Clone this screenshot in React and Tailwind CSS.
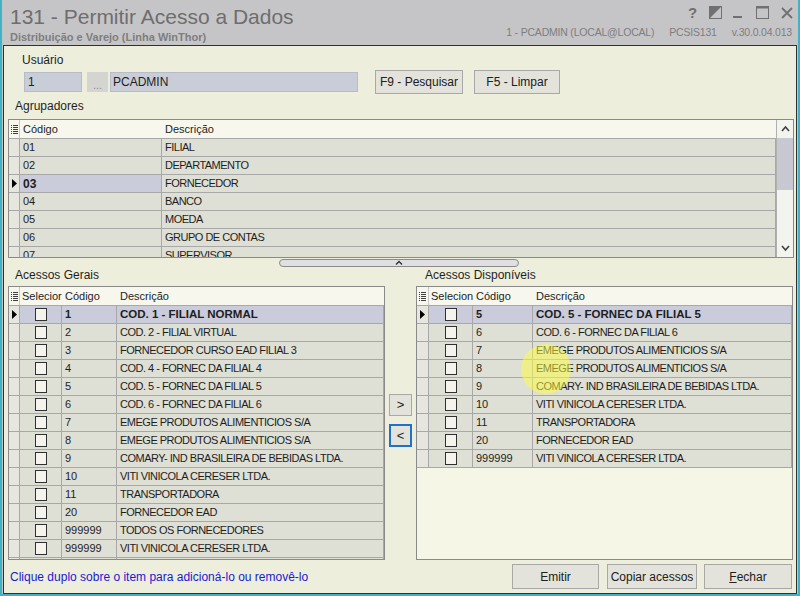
import React from 'react'

const font = "font-['Liberation_Sans',Arial,sans-serif]"

const agrupadores = [
  ['01', 'FILIAL'],
  ['02', 'DEPARTAMENTO'],
  ['03', 'FORNECEDOR'],
  ['04', 'BANCO'],
  ['05', 'MOEDA'],
  ['06', 'GRUPO DE CONTAS'],
  ['07', 'SUPERVISOR'],
]

const gerais = [
  ['1', 'COD. 1 - FILIAL NORMAL'],
  ['2', 'COD. 2 - FILIAL VIRTUAL'],
  ['3', 'FORNECEDOR CURSO EAD FILIAL 3'],
  ['4', 'COD. 4 - FORNEC DA FILIAL 4'],
  ['5', 'COD. 5 - FORNEC DA FILIAL 5'],
  ['6', 'COD. 6 - FORNEC DA FILIAL 6'],
  ['7', 'EMEGE PRODUTOS ALIMENTICIOS S/A'],
  ['8', 'EMEGE PRODUTOS ALIMENTICIOS S/A'],
  ['9', 'COMARY- IND BRASILEIRA DE BEBIDAS LTDA.'],
  ['10', 'VITI VINICOLA CERESER LTDA.'],
  ['11', 'TRANSPORTADORA'],
  ['20', 'FORNECEDOR EAD'],
  ['999999', 'TODOS OS FORNECEDORES'],
  ['999999', 'VITI VINICOLA CERESER LTDA.'],
]

const disponiveis = [
  ['5', 'COD. 5 - FORNEC DA FILIAL 5'],
  ['6', 'COD. 6 - FORNEC DA FILIAL 6'],
  ['7', 'EMEGE PRODUTOS ALIMENTICIOS S/A'],
  ['8', 'EMEGE PRODUTOS ALIMENTICIOS S/A'],
  ['9', 'COMARY- IND BRASILEIRA DE BEBIDAS LTDA.'],
  ['10', 'VITI VINICOLA CERESER LTDA.'],
  ['11', 'TRANSPORTADORA'],
  ['20', 'FORNECEDOR EAD'],
  ['999999', 'VITI VINICOLA CERESER LTDA.'],
]

function ColsIcon() {
  return (
    <svg width="7" height="9" viewBox="0 0 7 9" className="shrink-0">
      {[0, 2, 4, 6, 8].map((y) => (
        <g key={y}>
          <rect x="0" y={y} width="1" height="1" fill="#404040" />
          <rect x="2" y={y} width="5" height="1" fill="#404040" />
        </g>
      ))}
    </svg>
  )
}

function Pointer() {
  return (
    <svg width="5" height="9" viewBox="0 0 5 9">
      <path d="M0 0 L5 4.5 L0 9 Z" fill="#000" />
    </svg>
  )
}

function Check() {
  return <div className="w-[12px] h-[13px] border border-[#303030] bg-[#f4f4ec]" />
}

function TitleIcons() {
  return (
    <div className="flex items-center text-[#707070] pr-[5px] pt-[5px] h-[20px]">
      <span className="text-[15px] font-bold leading-none w-[8px]">?</span>
      <svg width="13" height="13" viewBox="0 0 13 13" className="ml-[13px]">
        <rect x="0.5" y="0.5" width="12" height="12" fill="none" stroke="#707070" />
        <path d="M1 1 H12 L1 12 Z" fill="#707070" />
      </svg>
      <svg width="9" height="13" viewBox="0 0 9 13" className="ml-[11px]">
        <rect x="0" y="10" width="9" height="2" fill="#707070" />
      </svg>
      <svg width="13" height="13" viewBox="0 0 13 13" className="ml-[14px]">
        <rect x="0.5" y="0.5" width="12" height="12" fill="none" stroke="#707070" />
        <rect x="0.5" y="0.5" width="12" height="2" fill="#707070" />
      </svg>
      <svg width="12" height="12" viewBox="0 0 12 12" className="ml-[12px]">
        <path d="M1 1 L11 11 M11 1 L1 11" stroke="#707070" strokeWidth="1.8" />
      </svg>
    </div>
  )
}

function Btn({ children, className = '' }) {
  return (
    <div
      className={`flex items-center justify-center border border-[#a8a8a8] bg-[#e3e3db] text-[12px] text-[#202020] ${className}`}
    >
      {children}
    </div>
  )
}

function AccessGrid({ rows, selLabel, w, selected, fillEmpty }) {
  return (
    <div className="h-[274px] border border-[#8a8a8a] bg-[#f6f6e6] overflow-hidden flex flex-col">
      <div className="flex h-[19px] bg-[#f7f7ee] border-b border-[#a8a8a8] shrink-0">
        <div style={{ width: w[0] }} className="flex items-center justify-center border-r border-[#c8c8c8]">
          <ColsIcon />
        </div>
        <div style={{ width: w[1] }} className="flex items-center pl-[2px]">{selLabel}</div>
        <div style={{ width: w[2] }} className="flex items-center pl-[3px]">Código</div>
        <div style={{ width: w[3] }} className="flex items-center pl-[3px]">Descrição</div>
      </div>
      {rows.map(([cod, desc], i) => {
        const sel = i === selected
        return (
          <div key={i} className={`flex h-[18px] shrink-0 ${sel ? 'bg-[#cacbdb] font-bold' : 'bg-[#dedfd5]'}`}>
            <div
              style={{ width: w[0] }}
              className="flex items-center justify-center border-r border-b border-[#a8a8a8] bg-[#e6e6de]"
            >
              {sel && <Pointer />}
            </div>
            <div style={{ width: w[1] }} className="flex items-center justify-center border-r border-b border-[#a8a8a8]">
              <Check />
            </div>
            <div style={{ width: w[2] }} className="flex items-center pl-[3px] border-r border-b border-[#a8a8a8]">
              {cod}
            </div>
            <div
              style={{ width: w[3] }}
              className={`flex items-center pl-[3px] border-r border-b border-[#a8a8a8] whitespace-nowrap overflow-hidden ${sel ? 'text-[11.5px]' : 'tracking-[-0.5px]'}`}
            >
              {desc}
            </div>
          </div>
        )
      })}
      {fillEmpty && <div className="flex-1" />}
      {!fillEmpty && (
        <div className="flex flex-1 bg-[#dedfd5]">
          <div style={{ width: w[0] }} className="border-r border-[#a8a8a8] bg-[#e6e6de]" />
          <div style={{ width: w[1] }} className="border-r border-[#a8a8a8]" />
          <div style={{ width: w[2] }} className="border-r border-[#a8a8a8]" />
          <div style={{ width: w[3] }} className="border-r border-[#a8a8a8]" />
        </div>
      )}
    </div>
  )
}

export default function App() {
  return (
    <div className={`${font} w-[800px] h-[596px] bg-[#c5c5c7] border-x-2 border-b-2 border-[#3fb3c6] flex flex-col relative overflow-hidden`}>
      {/* title bar */}
      <div className="h-[45px] flex justify-between shrink-0">
        <div className="pl-[8px] pt-[4px]">
          <div className="text-[21px] leading-[25px] text-[#6e6e6e]">131 - Permitir Acesso a Dados</div>
          <div className="text-[11px] font-bold text-[#7e7e7e] leading-[14px] mt-[1px]">
            Distribuição e Varejo (Linha WinThor)
          </div>
        </div>
        <div className="flex flex-col items-end">
          <TitleIcons />
          <div className="text-[10.5px] tracking-[-0.2px] text-[#7e7e7e] mt-[5px] pr-[6px] flex gap-[15px]">
            <span>1 - PCADMIN (LOCAL@LOCAL)</span>
            <span>PCSIS131</span>
            <span>v.30.0.04.013</span>
          </div>
        </div>
      </div>

      {/* body */}
      <div className="flex-1 mx-[1px] border border-[#303030] bg-[#eeeedd] flex flex-col text-[11px] text-[#1e1e1e] pr-[2px]">
        <div className="pl-[18px] mt-[8px] text-[12px] leading-[13px]">Usuário</div>
        <div className="flex items-center mt-[3px] h-[24px] pl-[20px]">
          <div className="w-[58px] h-[20px] bg-[#c9cdd8] border border-[#b8bcc8] flex items-center pl-[3px] text-[12px]">1</div>
          <div className="w-[21px] h-[20px] ml-[5px] bg-[#d4d4d0] text-[#909090] flex items-end justify-center text-[11px] leading-[14px]">...</div>
          <div className="w-[248px] h-[20px] ml-[2px] bg-[#c9cdd8] border border-[#b8bcc8] flex items-center pl-[2px] text-[12px]">PCADMIN</div>
          <Btn className="w-[88px] h-[24px] ml-[17px]">F9 - Pesquisar</Btn>
          <Btn className="w-[86px] h-[24px] ml-[11px]">F5 - Limpar</Btn>
        </div>
        <div className="pl-[11px] mt-[6px] text-[12px] leading-[13px]">Agrupadores</div>

        {/* agrupadores grid */}
        <div className="ml-[4px] mt-[6px] w-[786px] h-[139px] border border-[#8a8a8a] bg-[#f6f6e6] flex overflow-hidden">
          <div className="flex-1 flex flex-col">
            <div className="flex h-[19px] bg-[#f7f7ee] border-b border-[#a8a8a8] shrink-0">
              <div className="w-[11px] flex items-center justify-center border-r border-[#c8c8c8]">
                <ColsIcon />
              </div>
              <div className="w-[142px] flex items-center pl-[3px]">Código</div>
              <div className="flex-1 flex items-center pl-[3px]">Descrição</div>
            </div>
            {agrupadores.map(([cod, desc], i) => {
              const sel = i === 2
              return (
                <div key={cod} className="flex h-[18px] shrink-0 bg-[#dedfd5]">
                  <div className="w-[11px] flex items-center justify-center border-r border-b border-[#a8a8a8] bg-[#e6e6de]">
                    {sel && <Pointer />}
                  </div>
                  <div className={`w-[142px] flex items-center pl-[3px] border-r border-b border-[#a8a8a8] ${sel ? 'bg-[#cacbdb] font-bold text-[12px]' : ''}`}>
                    {cod}
                  </div>
                  <div className="flex-1 flex items-center pl-[3px] border-r border-b border-[#a8a8a8] tracking-[-0.5px]">{desc}</div>
                </div>
              )
            })}
          </div>
          <div className="w-[17px] border-l border-[#b0b0b0] bg-[#f4f4ee] flex flex-col items-center">
            <svg width="9" height="18" viewBox="0 0 9 18" className="shrink-0">
              <path d="M1 11 L4.5 7 L8 11" fill="none" stroke="#404040" strokeWidth="1.6" />
            </svg>
            <div className="w-full h-[52px] bg-[#c8c8d2]" />
            <div className="flex-1" />
            <svg width="9" height="16" viewBox="0 0 9 16" className="shrink-0">
              <path d="M1 5 L4.5 9 L8 5" fill="none" stroke="#404040" strokeWidth="1.6" />
            </svg>
          </div>
        </div>

        {/* splitter */}
        <div className="flex justify-center mt-[1px]">
          <div className="w-[240px] h-[8px] rounded-[4px] border border-[#8a8a8a] bg-[#e0e0e4] flex justify-center">
            <svg width="8" height="6" viewBox="0 0 8 6">
              <path d="M1 4.5 L4 1.5 L7 4.5" fill="none" stroke="#303030" strokeWidth="1.4" />
            </svg>
          </div>
        </div>

        <div className="flex mt-[2px] text-[12px] leading-[13px]">
          <div className="w-[410px] pl-[11px]">Acessos Gerais</div>
          <div className="pl-[11px]">Acessos Disponíveis</div>
        </div>

        {/* lists */}
        <div className="flex mt-[4px] pl-[4px]">
          <div className="w-[377px]">
            <AccessGrid rows={gerais} selLabel="Selecior" w={[11, 42, 55, 267]} selected={0} />
          </div>
          <div className="w-[31px] flex flex-col items-center pt-[108px]">
            <Btn className="w-[23px] h-[22px] text-[13px]">&gt;</Btn>
            <div className="mt-[8px] w-[23px] h-[23px] border-2 border-[#1e72c8] bg-[#e3e3db] flex items-center justify-center text-[13px]">
              &lt;
            </div>
          </div>
          <div className="w-[377px]">
            <AccessGrid rows={disponiveis} selLabel="Selecion" w={[12, 44, 60, 259]} selected={0} fillEmpty />
          </div>
        </div>

        {/* footer */}
        <div className="flex items-center mt-[4px] h-[25px]">
          <div className="pl-[6px] text-[12px] text-[#1a1ad0] flex-1">
            Clique duplo sobre o item para adicioná-lo ou removê-lo
          </div>
          <Btn className="w-[87px] h-[25px]">Emitir</Btn>
          <Btn className="w-[90px] h-[25px] ml-[8px]">Copiar acessos</Btn>
          <Btn className="w-[88px] h-[25px] ml-[7px] mr-[2px]">
            <span className="underline">F</span>echar
          </Btn>
        </div>
      </div>

      {/* cursor highlight */}
      <div className="absolute left-[519px] top-[344px] w-[50px] h-[50px] rounded-full bg-[#ffff40]/50 pointer-events-none" />
    </div>
  )
}
